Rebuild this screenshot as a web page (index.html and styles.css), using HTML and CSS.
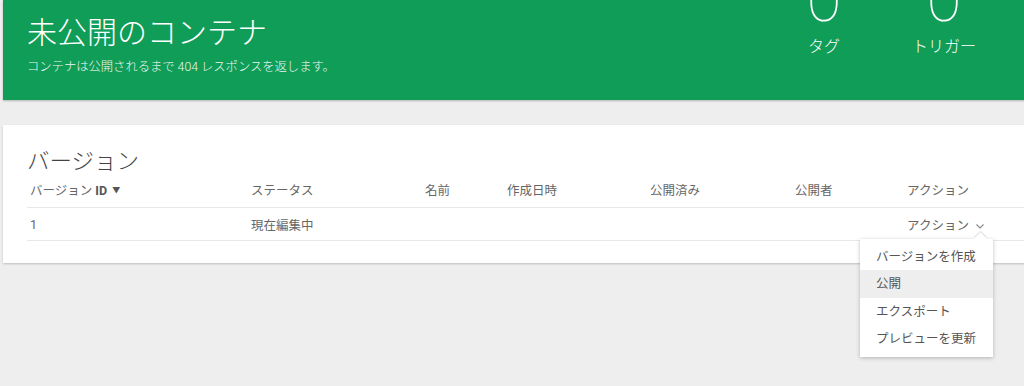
FILE: index.html
```html
<!DOCTYPE html>
<html lang="ja">
  <head>
    <title>未公開のコンテナ</title>
    <link rel="stylesheet" href="styles.css">
  </head>
  <body>
    <div class="page">
      <header class="banner">
        <div class="banner-text">
          <h1>未公開のコンテナ</h1>
          <p>コンテナは公開されるまで 404 レスポンスを返します。</p>
        </div>
        <div class="stats">
          <div class="stat stat-tags">
            <span class="stat-num">0</span>
            <span class="stat-label">タグ</span>
          </div>
          <div class="stat stat-triggers">
            <span class="stat-num">0</span>
            <span class="stat-label">トリガー</span>
          </div>
        </div>
      </header>

      <section class="card">
        <h2>バージョン</h2>
        <div class="table">
          <div class="row head">
            <div class="cell">バージョン <b>ID</b> <span class="sort">&#9660;</span></div>
            <div class="cell">ステータス</div>
            <div class="cell">名前</div>
            <div class="cell">作成日時</div>
            <div class="cell">公開済み</div>
            <div class="cell">公開者</div>
            <div class="cell">アクション</div>
          </div>
          <div class="row">
            <div class="cell">1</div>
            <div class="cell">現在編集中</div>
            <div class="cell"></div>
            <div class="cell"></div>
            <div class="cell"></div>
            <div class="cell"></div>
            <div class="cell action">
              アクション
              <svg class="chev" width="10" height="6" viewBox="0 0 10 6"><path d="M1.5 1.5l3.5 3.5 3.5-3.5" fill="none" stroke="#888" stroke-width="1.1"/></svg>
              <ul class="menu">
                <li>バージョンを作成</li>
                <li class="active">公開</li>
                <li>エクスポート</li>
                <li>プレビューを更新</li>
              </ul>
            </div>
          </div>
        </div>
      </section>
    </div>
  </body>
</html>
```

FILE: styles.css
```css
html, body {
  margin: 0;
  height: 100%;
  background: #eeeeee;
  font-family: Roboto, "Noto Sans CJK JP", sans-serif;
  overflow: hidden;
}

.page {
  padding-left: 3px;
  width: 1100px;
}

.banner {
  display: flex;
  height: 100px;
  background: #0f9d58;
  color: #fff;
  box-shadow: 0 1px 2px rgba(0, 0, 0, 0.25);
  overflow: hidden;
}

.banner-text {
  padding-left: 24px;
  width: 737px;
}

.banner h1 {
  margin: 13px 0 0;
  font-size: 30px;
  font-weight: 300;
  line-height: 40px;
}

.banner p {
  margin: 6px 0 0;
  font-size: 12.3px;
  font-weight: 300;
  line-height: 16px;
  opacity: 0.92;
}

.stats {
  display: flex;
}

.stat {
  display: flex;
  flex-direction: column;
  align-items: center;
  width: 120px;
  margin-top: -33px;
}

.stat-num {
  font-size: 64px;
  font-weight: 100;
  line-height: 66px;
}

.stat-label {
  font-size: 16px;
  font-weight: 300;
  line-height: 20px;
  margin-top: 4px;
}

.card {
  margin-top: 25px;
  height: 138px;
  background: #fff;
  box-shadow: 0 1px 2px rgba(0, 0, 0, 0.2);
  padding-left: 24px;
  box-sizing: border-box;
  padding-top: 20px;
}

.card h2 {
  margin: 0 0 3px;
  font-size: 22.5px;
  font-weight: 300;
  color: #444;
  line-height: 32px;
}

.row {
  display: grid;
  grid-template-columns: 221px 174px 82px 143px 145px 112px 200px;
  border-bottom: 1px solid #e8e8e8;
  height: 32px;
  align-items: center;
  font-size: 12.5px;
  color: #666;
}

.head {
  height: 27px;
  align-items: start;
}

.cell {
  padding-left: 3px;
  position: relative;
}

.head b {
  font-weight: 700;
  color: #555;
}

.sort {
  font-size: 8px;
  color: #555;
  margin-left: 2px;
  vertical-align: 2px;
}

.chev {
  margin-left: 3px;
  vertical-align: 1px;
}

.menu {
  position: absolute;
  left: -44px;
  top: 24px;
  width: 133px;
  margin: 0;
  padding: 4px 0;
  list-style: none;
  background: #fff;
  box-shadow: 0 1px 4px rgba(0, 0, 0, 0.25);
  z-index: 2;
}

.menu::before {
  content: "";
  position: absolute;
  top: -5px;
  right: 8px;
  width: 9px;
  height: 9px;
  background: #fff;
  transform: rotate(45deg);
  box-shadow: -1px -1px 1px rgba(0, 0, 0, 0.12);
}

.menu li {
  position: relative;
  height: 27.5px;
  line-height: 27.5px;
  padding-left: 16px;
  font-size: 12.5px;
  color: #555;
}

.menu li.active {
  background: #eeeeee;
}
```
